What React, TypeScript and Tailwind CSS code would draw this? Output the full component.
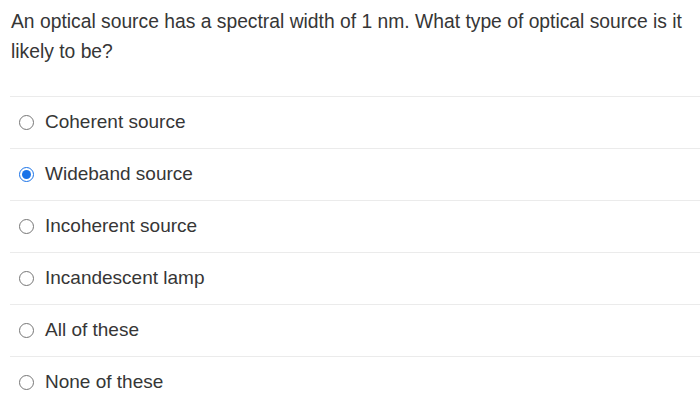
import React from 'react';

const options = [
  'Coherent source',
  'Wideband source',
  'Incoherent source',
  'Incandescent lamp',
  'All of these',
  'None of these',
];

const Radio: React.FC<{ checked?: boolean }> = ({ checked }) =>
  checked ? (
    <span className="flex h-[15px] w-[15px] shrink-0 items-center justify-center rounded-full border-[1.5px] border-[#1a73e8]">
      <span className="h-[9px] w-[9px] rounded-full bg-[#1a73e8]" />
    </span>
  ) : (
    <span className="h-[15px] w-[15px] shrink-0 rounded-full border-[1.5px] border-[#767676]" />
  );

export default function App() {
  return (
    <div className="h-[405px] w-[700px] overflow-hidden bg-white font-['Liberation_Sans',Arial,sans-serif] text-[#363636]">
      <p className="pl-[11px] pr-2 pt-[7px] text-[19.3px] leading-[30px]">
        An optical source has a spectral width of 1 nm. What type of optical source is it likely to be?
      </p>
      <div className="ml-[10px] mt-[29px]">
        {options.map((o, i) => (
          <div key={o} className="flex h-[52px] items-center gap-[11px] border-t border-[#ebebeb] pl-[9px]">
            <Radio checked={i === 1} />
            <span className="text-[19px]">{o}</span>
          </div>
        ))}
      </div>
    </div>
  );
}
